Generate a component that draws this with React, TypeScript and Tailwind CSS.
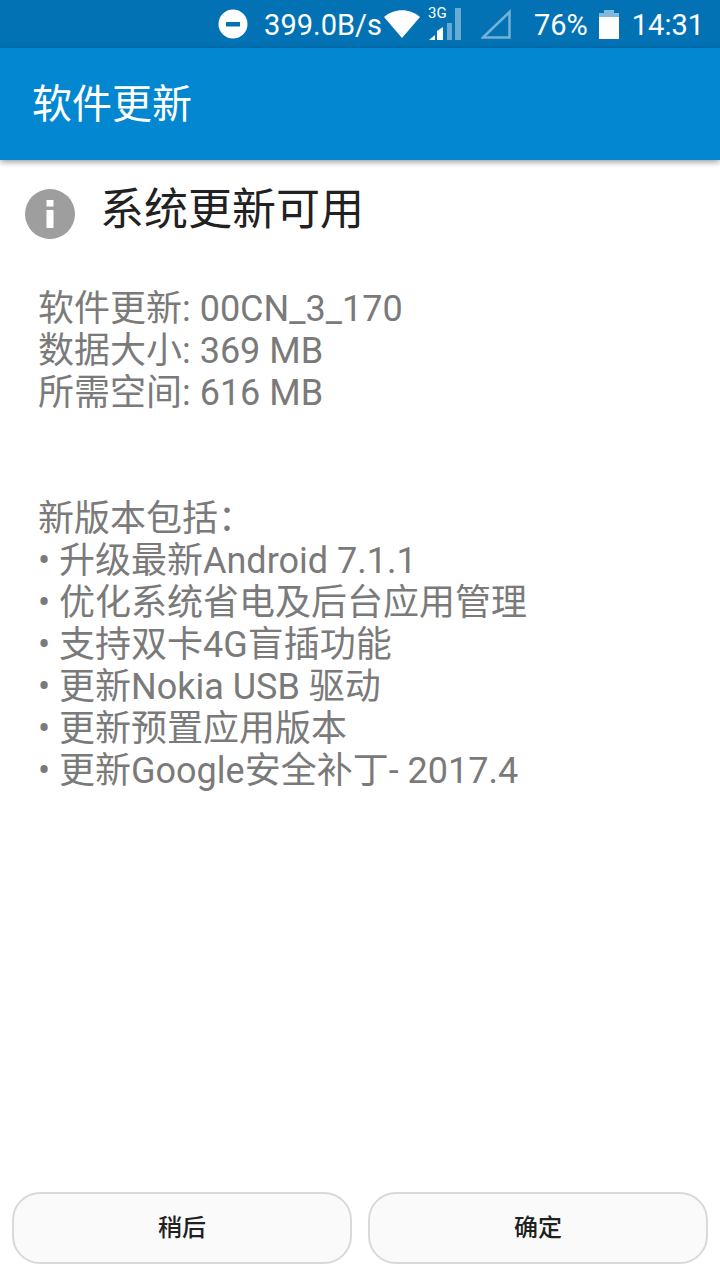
import React from "react";

const font = "font-['Roboto','Noto_Sans_CJK_SC',sans-serif]";

function StatusBar() {
  return (
    <div className="h-12 bg-[#0272b4] flex items-center justify-end pr-[16px] text-white text-[29px] leading-none">
      <svg width="30" height="30" viewBox="0 0 30 30" className="mr-[16px]">
        <circle cx="15" cy="15" r="14.5" fill="#fff" />
        <rect x="8" y="13" width="14" height="4.5" fill="#0272b4" />
      </svg>
      <span className="pt-[2px]">399.0B/s</span>
      <svg width="36" height="28" viewBox="0 0 36 28" className="ml-[2px]">
        <path d="M0 7 C10 -2 26 -2 36 7 L18 28 Z" fill="#fff" />
      </svg>
      <svg width="34" height="44" viewBox="0 0 34 44" className="ml-[8px]">
        <text x="0" y="16" fontSize="15" fill="#fff" fontFamily="Roboto">3G</text>
        <path d="M1 38 L7 38 L7 33 Z" fill="#fff" />
        <path d="M9 38 L9 29 L15 25 L15 38 Z" fill="#fff" />
        <rect x="19" y="21" width="5" height="17" fill="#fff" fillOpacity="0.4" />
        <rect x="27" y="6" width="6" height="32" fill="#fff" fillOpacity="0.4" />
      </svg>
      <svg width="30" height="30" viewBox="0 0 30 30" className="ml-[19px]">
        <path d="M2 28.5 L28.5 3 L28.5 28.5 Z" fill="none" stroke="#fff" strokeOpacity="0.45" strokeWidth="2.5" />
      </svg>
      <span className="ml-[23px] pt-[2px]">76%</span>
      <svg width="20" height="29" viewBox="0 0 20 29" className="ml-[11px]">
        <rect x="5" y="0" width="10" height="3" fill="#fff" fillOpacity="0.5" />
        <rect x="0" y="3" width="20" height="4" fill="#fff" fillOpacity="0.5" />
        <rect x="0" y="7" width="20" height="22" fill="#fff" />
      </svg>
      <span className="ml-[13px] pt-[2px]">14:31</span>
    </div>
  );
}

const specs = ["软件更新: 00CN_3_170", "数据大小: 369 MB", "所需空间: 616 MB"];

const changes = [
  "升级最新Android 7.1.1",
  "优化系统省电及后台应用管理",
  "支持双卡4G盲插功能",
  "更新Nokia USB 驱动",
  "更新预置应用版本",
  "更新Google安全补丁- 2017.4",
];

export default function App() {
  return (
    <div className={`w-[720px] h-[1280px] bg-white flex flex-col ${font}`}>
      <StatusBar />
      <div className="h-28 bg-[#0287d0] flex items-center pl-[32px] pt-[2px] text-white text-[40px] shadow-[0_2px_6px_rgba(0,0,0,0.4)]">
        软件更新
      </div>
      <div className="flex items-center pl-[25px] mt-[29px]">
        <svg width="50" height="50" viewBox="0 0 50 50">
          <circle cx="25" cy="25" r="25" fill="#9e9e9e" />
          <rect x="21.5" y="11" width="7" height="6.5" fill="#fff" />
          <rect x="21.5" y="21" width="7" height="18" fill="#fff" />
        </svg>
        <div className="ml-[25px] text-[44px] leading-[50px] text-[#212121] -mt-[8px]">系统更新可用</div>
      </div>
      <div className="pl-[38px] mt-[49px] text-[36px] leading-[42px] text-[#7a7a7a]">
        {specs.map((line) => (
          <div key={line}>{line}</div>
        ))}
        <div className="mt-[84px]">新版本包括：</div>
        {changes.map((line) => (
          <div key={line} className="flex">
            <span className="w-[21px]">•</span>
            <span>{line}</span>
          </div>
        ))}
      </div>
      <div className="mt-auto flex gap-4 px-3 pb-4">
        <button className="flex-1 h-[72px] rounded-[28px] border-2 border-[#d9d9d9] bg-[#fafafa] text-[24px] font-medium text-[#212121]">稍后</button>
        <button className="flex-1 h-[72px] rounded-[28px] border-2 border-[#d9d9d9] bg-[#fafafa] text-[24px] font-medium text-[#212121]">确定</button>
      </div>
    </div>
  );
}
